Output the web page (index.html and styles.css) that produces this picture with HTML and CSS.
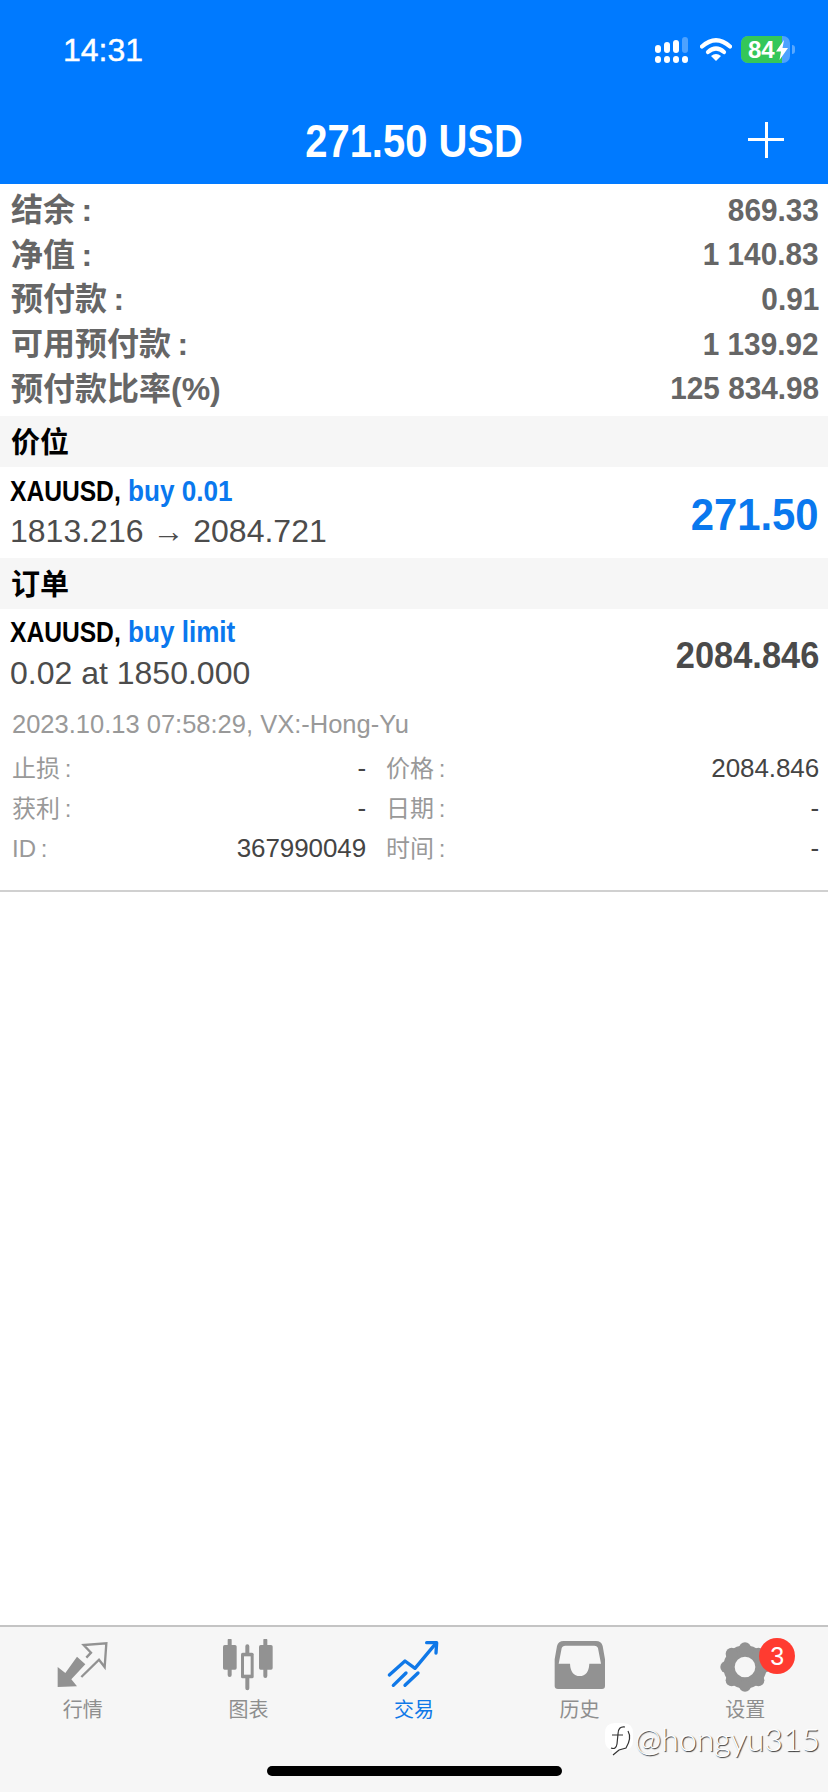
FILE: index.html
```html
<!DOCTYPE html>
<html lang="zh">

<head>
    <meta charset="UTF-8">
    <meta name="viewport" content="width=device-width, initial-scale=1.0">
    <title>交易</title>
    <link rel="stylesheet" href="styles.css">
</head>

<body>
    <header class="top-bar">
        <div class="status-bar">
            <span class="clock">14:31</span>
            <div class="status-icons">
                <svg class="signal" viewBox="0 0 33 26">
                    <rect x="0" y="8" width="6" height="8" rx="3" fill="#fff"/>
                    <rect x="9" y="5" width="6" height="11" rx="3" fill="#fff"/>
                    <rect x="18" y="3" width="6" height="13" rx="3" fill="#fff"/>
                    <rect x="27" y="0" width="6" height="16" rx="3" fill="#fff" opacity=".3"/>
                    <rect x="0" y="19" width="6" height="7" rx="3" fill="#fff"/>
                    <rect x="9" y="19" width="6" height="7" rx="3" fill="#fff"/>
                    <rect x="18" y="19" width="6" height="7" rx="3" fill="#fff"/>
                    <rect x="27" y="19" width="6" height="7" rx="3" fill="#fff"/>
                </svg>
                <svg class="wifi" viewBox="0 0 32 24">
                    <path d="M2 9.5Q16 -3 30 9.5" fill="none" stroke="#fff" stroke-width="4.2" stroke-linecap="round"/>
                    <path d="M8 15Q16 8 24 15" fill="none" stroke="#fff" stroke-width="4.2" stroke-linecap="round"/>
                    <path d="M16 24L11 19Q16 15 21 19Z" fill="#fff"/>
                </svg>
                <div class="battery">
                    <div class="battery-fill" style="width: 84%"></div>
                    <span class="battery-text">84</span>
                    <svg class="bolt" viewBox="0 0 12 20">
                        <path d="M8 0L0 11.5H5L3.5 20L12 8H6.5Z" fill="#fff"/>
                    </svg>
                </div>
            </div>
        </div>
        <div class="title-row">
            <span></span>
            <h1 class="title">271.50 USD</h1>
            <div class="add-btn"></div>
        </div>
    </header>

    <section class="summary">
        <div class="summary-row"><span>结余&thinsp;:</span><b>869.33</b></div>
        <div class="summary-row"><span>净值&thinsp;:</span><b>1 140.83</b></div>
        <div class="summary-row"><span>预付款&thinsp;:</span><b>0.91</b></div>
        <div class="summary-row"><span>可用预付款&thinsp;:</span><b>1 139.92</b></div>
        <div class="summary-row"><span>预付款比率(%)</span><b>125 834.98</b></div>
    </section>

    <h2 class="section-head">价位</h2>
    <div class="trade-row">
        <div>
            <div class="trade-name"><b>XAUUSD,</b> <em>buy 0.01</em></div>
            <div class="trade-sub">1813.216 → 2084.721</div>
        </div>
        <div class="profit">271.50</div>
    </div>

    <h2 class="section-head">订单</h2>
    <div class="trade-row order-row">
        <div>
            <div class="trade-name"><b>XAUUSD,</b> <em>buy limit</em></div>
            <div class="trade-sub">0.02 at 1850.000</div>
        </div>
        <div class="order-price">2084.846</div>
    </div>
    <div class="order-date">2023.10.13 07:58:29, VX:-Hong-Yu</div>
    <div class="order-details">
        <div class="detail"><span>止损&thinsp;:</span><b>-</b></div>
        <div class="detail"><span>价格&thinsp;:</span><b>2084.846</b></div>
        <div class="detail"><span>获利&thinsp;:</span><b>-</b></div>
        <div class="detail"><span>日期&thinsp;:</span><b>-</b></div>
        <div class="detail"><span class="latin">ID&thinsp;:</span><b>367990049</b></div>
        <div class="detail"><span>时间&thinsp;:</span><b>-</b></div>
    </div>

    <main class="empty"></main>

    <nav class="tab-bar">
        <div class="tab">
            <svg class="tab-icon" viewBox="164 84 168 168">
                <path d="M172 168L195 186L230 137L255 160L213 205L230 226L172 228Z" fill="#929292"/>
                <path d="M243 198L296 146L313 168L318 97L250 102L272 125L258 140" fill="none" stroke="#929292" stroke-width="7"/>
            </svg>
            <span>行情</span>
        </div>
        <div class="tab">
            <svg class="tab-icon" viewBox="661 84 168 168">
                <path d="M690 88V192M797 88V195M743 106V232" stroke="#929292" stroke-width="12" stroke-linecap="round"/>
                <rect x="670" y="102" width="41" height="74" rx="5" fill="#929292"/>
                <rect x="778" y="102" width="41" height="74" rx="5" fill="#929292"/>
                <rect x="724" y="125" width="38" height="77" rx="5" fill="#929292"/>
                <rect x="733" y="136" width="20" height="55" fill="#f6f6f6"/>
            </svg>
            <span>图表</span>
        </div>
        <div class="tab tab-active">
            <svg class="tab-icon" viewBox="258 84 168 168">
                <path d="M268 192L315 150L345 172L405 100" fill="none" stroke="#0f78e8" stroke-width="10" stroke-linecap="round" stroke-linejoin="round"/>
                <path d="M380 95H410L408 126" fill="none" stroke="#0f78e8" stroke-width="10" stroke-linecap="round" stroke-linejoin="round"/>
                <path d="M280 223L318 186M315 223L354 186" stroke="#0f78e8" stroke-width="10" stroke-linecap="round"/>
            </svg>
            <span>交易</span>
        </div>
        <div class="tab">
            <svg class="tab-icon" viewBox="750 84 168 168">
                <path fill-rule="evenodd" fill="#929292" d="M785 90H882Q898 90 902 105L909 145V225Q909 234 900 234H768Q758 234 758 225V145L765 105Q769 90 785 90ZM790 104H877Q886 104 888 112L897 158H862Q860 195 833 195Q806 195 804 158H770L779 112Q781 104 790 104Z"/>
            </svg>
            <span>历史</span>
        </div>
        <div class="tab">
            <svg class="tab-icon" viewBox="376 76 168 168">
                <circle cx="460" cy="160" r="48" fill="none" stroke="#929292" stroke-width="34"/>
                <g fill="#929292">
                    <circle cx="460" cy="104" r="18"/>
                    <circle cx="460" cy="216" r="18"/>
                    <circle cx="404" cy="160" r="18"/>
                    <circle cx="516" cy="160" r="18"/>
                    <circle cx="420" cy="120" r="18"/>
                    <circle cx="500" cy="120" r="18"/>
                    <circle cx="420" cy="200" r="18"/>
                    <circle cx="500" cy="200" r="18"/>
                </g>
            </svg>
            <span>设置</span>
            <i class="badge">3</i>
        </div>

        <div class="watermark">
            <svg class="wm-logo" viewBox="0 0 30 34">
                <path d="M11 1H19Q29 1 29 11V19Q29 28 19 28H13L8 33L8 28Q1 26 1 19V11Q1 1 11 1Z" fill="#fff"/>
                <path d="M21 5Q14 4 14 12L13 22Q12 28 7 26M8 13H19M24 9Q28 16 22 26L15 28L9 33" fill="none" stroke="#333" stroke-width="1.2"/>
            </svg>
            <span>@hongyu315</span>
        </div>
        <div class="home-bar"></div>
    </nav>
</body>

</html>
```

FILE: styles.css
```css
* {
    box-sizing: border-box;
}

body {
    margin: 0;
    width: 828px;
    height: 1792px;
    display: flex;
    flex-direction: column;
    background: #fff;
    font-family: "Liberation Sans", "Noto Sans CJK SC", sans-serif;
}

.top-bar {
    height: 184px;
    background: #007aff;
    color: #fff;
}

.status-bar {
    height: 100px;
    padding: 30px 38px 0 63px;
    display: flex;
    justify-content: space-between;
    align-items: flex-start;
}

.clock {
    font-size: 32px;
    line-height: 40px;
    -webkit-text-stroke: .4px #fff;
}

.status-icons {
    display: flex;
    align-items: flex-start;
    gap: 12px;
    padding-top: 6px;
}

.signal {
    width: 33px;
    height: 26px;
    margin-top: 1px;
}

.wifi {
    width: 32px;
    height: 24px;
    margin-top: 1px;
}

.battery {
    width: 49px;
    height: 27px;
    margin-left: -3px;
    display: flex;
    align-items: center;
    position: relative;
    padding-left: 7px;
    border-radius: 7px;
    background: rgba(255, 255, 255, .3);
}

.battery::after {
    content: "";
    position: absolute;
    left: 51px;
    top: 9px;
    width: 3px;
    height: 9px;
    border-radius: 0 3px 3px 0;
    background: rgba(255, 255, 255, .35);
}

.battery-fill {
    position: absolute;
    left: 0;
    top: 0;
    bottom: 0;
    border-radius: 7px 0 0 7px;
    background: #34c759;
}

.battery-text {
    position: relative;
    font-size: 24px;
    font-weight: bold;
    line-height: 27px;
}

.bolt {
    position: relative;
    width: 12px;
    height: 20px;
    margin-left: 1px;
}

.title-row {
    height: 84px;
    padding: 0 44px;
    display: grid;
    grid-template-columns: 1fr auto 1fr;
    align-items: center;
}

/* the app's bold face runs narrower than Liberation Sans Bold */
.title,
.summary-row b,
.profit,
.order-price,
.trade-name b,
.trade-name em {
    display: inline-block;
    transform: scaleX(.93);
    transform-origin: right center;
}

.title {
    margin: 0;
    font-size: 47px;
    font-weight: bold;
    padding-bottom: 3px;
    transform: scaleX(.85);
    transform-origin: center;
}

.add-btn {
    justify-self: end;
    width: 36px;
    height: 36px;
    margin-bottom: 5px;
    background:
        linear-gradient(#fff, #fff) center / 100% 3px no-repeat,
        linear-gradient(#fff, #fff) center / 3px 100% no-repeat;
}

.summary {
    padding: 4px 9px 5px 11px;
}

.summary-row {
    height: 44.6px;
    display: flex;
    justify-content: space-between;
    align-items: center;
    color: #666;
    font-size: 32px;
}

.summary-row span {
    padding-bottom: 6px;
    font-weight: bold;
}

.summary-row b {
    font-size: 32px;
}

.section-head {
    height: 51px;
    margin: 0;
    padding: 2px 0 0 11px;
    background: #f6f6f6;
    color: #000;
    font-size: 29px;
    font-weight: bold;
    line-height: 50px;
}

.trade-row {
    height: 91px;
    padding: 0 9px 0 10px;
    display: flex;
    justify-content: space-between;
    align-items: center;
}

.order-row {
    height: 84px;
    padding-top: 5px;
}

.trade-name {
    height: 40px;
    font-size: 30px;
    line-height: 38px;
    white-space: nowrap;
}

.trade-name b {
    margin-right: -25px;
    transform: scaleX(.82);
    transform-origin: left center;
}

.trade-name em {
    color: #0a78ee;
    font-style: normal;
    font-weight: bold;
    transform: scaleX(.87);
    transform-origin: left center;
}

.trade-sub {
    height: 40px;
    color: #4c4c4c;
    font-size: 32px;
    line-height: 38px;
}

.order-row .trade-sub {
    line-height: 41px;
}

.profit {
    margin-top: 5px;
    color: #0a78ee;
    font-size: 45px;
    font-weight: bold;
}

.order-price {
    margin-top: 6px;
    color: #4a4a4a;
    font-size: 37px;
    font-weight: bold;
}

.order-date {
    height: 40px;
    margin-top: 11px;
    padding: 0 12px;
    color: #999;
    font-size: 25.5px;
    line-height: 40px;
}

.order-details {
    padding: 5px 9px 21px 12px;
    display: grid;
    grid-template-columns: 354px 1fr;
    column-gap: 20px;
    border-bottom: 2px solid #d0d0d0;
}

.detail {
    height: 40px;
    display: flex;
    justify-content: space-between;
    align-items: center;
    color: #999;
    font-size: 24px;
}

.detail span {
    padding-bottom: 4px;
}

.detail span.latin {
    padding-bottom: 0;
}

.detail b {
    color: #444;
    font-size: 26px;
    font-weight: normal;
    letter-spacing: -.1px;
}

.empty {
    flex: 1;
}

.tab-bar {
    height: 167px;
    padding-top: 12px;
    display: grid;
    grid-template-columns: repeat(5, 1fr);
    align-items: start;
    position: relative;
    border-top: 2px solid #c4c4c4;
    background: #f6f6f6;
}

.tab {
    display: flex;
    flex-direction: column;
    align-items: center;
    position: relative;
    color: #8e8e8e;
    font-size: 20px;
    line-height: 24px;
}

.tab-icon {
    width: 56px;
    height: 56px;
    margin-bottom: 3px;
}

.tab-active {
    color: #0f78e8;
}

.badge {
    position: absolute;
    left: 50%;
    top: -1px;
    width: 36px;
    height: 36px;
    margin-left: 14px;
    border-radius: 50%;
    background: #ff3b30;
    color: #fff;
    font-size: 25px;
    font-style: normal;
    line-height: 36px;
    text-align: center;
}

.watermark {
    position: absolute;
    right: 8px;
    top: 94px;
    display: flex;
    align-items: center;
    gap: 1px;
    color: #fff;
    font-family: Lato, sans-serif;
    font-size: 32px;
    font-weight: 300;
    line-height: 36px;
    text-shadow: 1px 1px 1px #333;
}

.wm-logo {
    width: 30px;
    height: 34px;
}

.home-bar {
    position: absolute;
    left: 267px;
    top: 139px;
    width: 295px;
    height: 10px;
    border-radius: 5px;
    background: #000;
}
```
